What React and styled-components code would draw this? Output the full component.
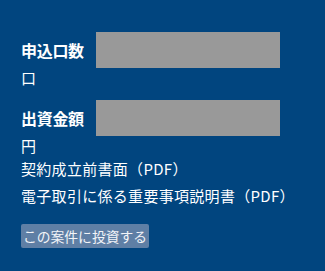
import React from "react";
import styled, { createGlobalStyle } from "styled-components";

const GlobalStyle = createGlobalStyle`
  html, body {
    margin: 0;
    padding: 0;
    background: #01457f;
  }
  body {
    font-family: "Noto Sans CJK JP", "Noto Sans", sans-serif;
    color: #fff;
  }
`;

function App() {
  return (
    <>
      <GlobalStyle />
      <Container>
        <Field>
          <Label>申込口数</Label>
          <Input />
        </Field>
        <Unit $gap={14}>口</Unit>
        <Field>
          <Label>出資金額</Label>
          <Input />
        </Field>
        <Unit $gap={0}>円</Unit>
        <Links>
          <DocLink>契約成立前書面（PDF）</DocLink>
          <DocLink>電子取引に係る重要事項説明書（PDF）</DocLink>
        </Links>
        <Button>この案件に投資する</Button>
      </Container>
    </>
  );
}

export default App;

const Container = styled.div`
  width: 325px;
  height: 271px;
  box-sizing: border-box;
  padding: 32px 0 0 21px;
  background: #01457f;
  overflow: hidden;
`;
const Field = styled.div`
  display: flex;
  align-items: center;
  height: 36px;
`;
const Label = styled.div`
  width: 75px;
  font-size: 16px;
  font-weight: bold;
  color: #fff;
  letter-spacing: -0.3px;
`;
const Input = styled.div`
  width: 184px;
  height: 36px;
  background: #999999;
`;
const Unit = styled.div`
  font-size: 15px;
  line-height: 18px;
  padding-top: 1px;
  margin-bottom: ${(p) => p.$gap - 1}px;
  color: #fff;
`;
const Links = styled.div`
  margin-top: 1px;
  display: flex;
  flex-direction: column;
`;
const DocLink = styled.a`
  font-size: 15px;
  line-height: 27px;
  letter-spacing: 0.3px;
  color: #fff;
  cursor: pointer;
`;
const Button = styled.button`
  margin-top: 15px;
  display: block;
  width: 128px;
  height: 24px;
  padding: 0;
  border: none;
  border-radius: 2px;
  background: #5f7fa5;
  color: #f2f4f8;
  font-family: "Noto Sans CJK JP", sans-serif;
  font-size: 13.8px;
  line-height: 24px;
  text-align: center;
`;
